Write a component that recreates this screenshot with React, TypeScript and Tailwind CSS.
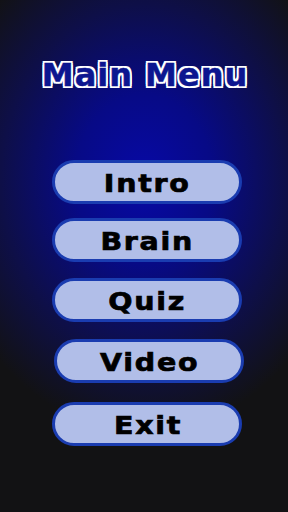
export default function App() {
  const items = [
    { label: "Intro", cls: "mt-0" },
    { label: "Brain", cls: "mt-[14px]" },
    { label: "Quiz", cls: "mt-[16px]" },
    { label: "Video", cls: "mt-[17px] translate-x-[2px]" },
    { label: "Exit", cls: "mt-[19px]" },
  ];
  return (
    <div className="h-[512px] w-[288px] overflow-hidden bg-[radial-gradient(ellipse_80%_55%_at_50%_35%,#0709a6_0%,#070a86_30%,#0e0f48_62%,#121214_90%)] flex flex-col items-center font-['DejaVu_Sans',sans-serif]">
      <h1 className="mt-[56px] ml-[2px] text-[32px] font-bold leading-[38px] text-[#0c1690] tracking-[1px] [-webkit-text-stroke:0.5px_#0c1690] [text-shadow:1px_1px_0_#fff,-1px_-1px_0_#fff,1px_-1px_0_#fff,-1px_1px_0_#fff,2px_0_0_#fff,-2px_0_0_#fff,0_2px_0_#fff,0_-2px_0_#fff,2px_2px_0_#fff,-2px_-2px_0_#fff,2px_-2px_0_#fff,-2px_2px_0_#fff]">
        Main Menu
      </h1>
      <div className="mt-[66px] ml-[5px] flex flex-col items-center">
        {items.map((it) => (
          <button
            key={it.label}
            className={`${it.cls} h-[44px] w-[190px] rounded-full border-[3px] border-[#1a3cb0] bg-[#b1bee8] text-black flex items-center justify-center`}
          >
            <span className="inline-block scale-x-[1.14] pl-[2px] pt-[3px] text-[25px] leading-[30px] font-bold tracking-[1.5px] [-webkit-text-stroke:0.7px_#000]">
              {it.label}
            </span>
          </button>
        ))}
      </div>
    </div>
  );
}
